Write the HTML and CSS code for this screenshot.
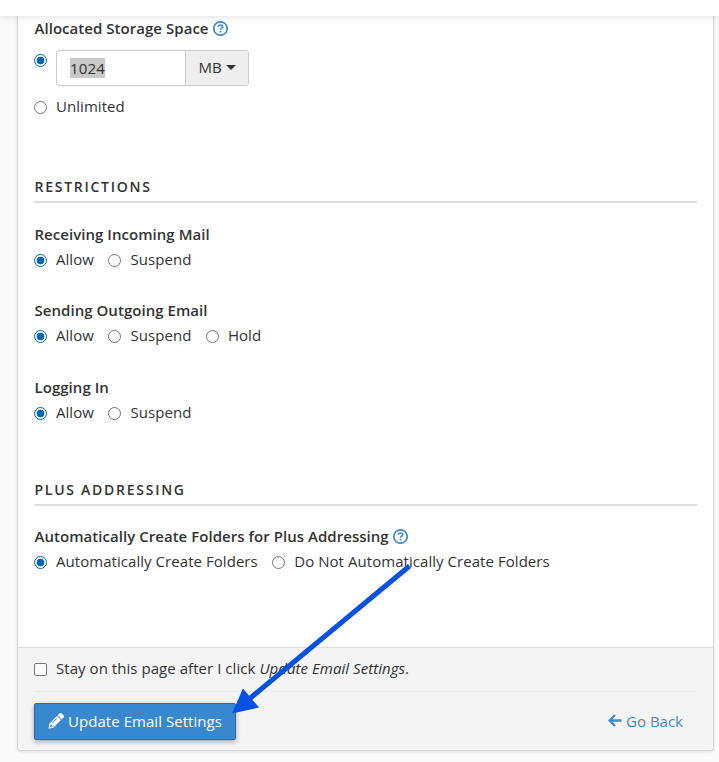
FILE: index.html
```html
<!DOCTYPE html>
<html lang="en">
<head>
<meta charset="utf-8">
<title>Email Settings</title>
<link rel="stylesheet" href="styles.css">
</head>
<body>
<header class="topbar"></header>
<main class="card">
  <form class="card-body">
    <section class="field storage">
      <div class="label">Allocated Storage Space
        <svg class="help" viewBox="0 0 15 15"><circle cx="7.5" cy="7.5" r="6.700"/><path d="M5.300 5.900C5.400 4.600 6.300 4 7.500 4c1.300 0 2.200.7 2.200 1.700C9.700 7.100 7.600 7.100 7.600 8.700M7.600 10v1.500"/></svg>
      </div>
      <div class="quota">
        <input type="radio" name="quota" checked>
        <div class="group"><span class="value"><span class="selected">1024</span></span><button type="button" class="unit">MB<span class="caret"></span></button></div>
      </div>
      <div class="options unlimited"><label><input type="radio" name="quota">Unlimited</label></div>
    </section>

    <h2 class="restrictions">Restrictions</h2>
    <section class="field">
      <div class="label">Receiving Incoming Mail</div>
      <div class="options">
        <label><input type="radio" name="receive" checked>Allow</label>
        <label><input type="radio" name="receive">Suspend</label>
      </div>
    </section>
    <section class="field sending">
      <div class="label">Sending Outgoing Email</div>
      <div class="options">
        <label><input type="radio" name="send" checked>Allow</label>
        <label><input type="radio" name="send">Suspend</label>
        <label><input type="radio" name="send">Hold</label>
      </div>
    </section>
    <section class="field login">
      <div class="label">Logging In</div>
      <div class="options">
        <label><input type="radio" name="login" checked>Allow</label>
        <label><input type="radio" name="login">Suspend</label>
      </div>
    </section>

    <h2 class="plus">Plus Addressing</h2>
    <section class="field">
      <div class="label">Automatically Create Folders for Plus Addressing
        <svg class="help" viewBox="0 0 15 15"><circle cx="7.5" cy="7.5" r="6.700"/><path d="M5.300 5.900C5.400 4.600 6.300 4 7.500 4c1.300 0 2.200.7 2.200 1.700C9.700 7.100 7.600 7.100 7.600 8.700M7.600 10v1.500"/></svg>
      </div>
      <div class="options">
        <label><input type="radio" name="plus" checked>Automatically Create Folders</label>
        <label><input type="radio" name="plus">Do Not Automatically Create Folders</label>
      </div>
    </section>
  </form>
  <footer class="card-footer">
    <div class="options stay"><label><input type="checkbox"><span>Stay on this page after I click <em>Update Email Settings</em>.</span></label></div>
    <div class="actions">
      <button type="button" class="primary">
        <svg class="pencil" viewBox="0 0 16 16"><path fill-rule="evenodd" d="M11.300.7a1.800 1.800 0 0 1 2.600 0l1.400 1.400a1.800 1.800 0 0 1 0 2.600L13.600 6.400 9.600 2.400zM8.900 3.100l4 4-7.600 7.600L.5 15.700l.8-5zM2.500 11.400l-.4 2.700 2.600-.5v-1.200H3.500v-1zM8.600 5.200L4.200 9.600l.5.5 4.400-4.400z"/></svg>Update Email Settings
      </button>
      <a class="back"><svg viewBox="0 0 14 13"><path d="M7 1L1.600 6.500 7 12M2 6.500h11.500"/></svg>Go Back</a>
    </div>
  </footer>
</main>
<svg class="pointer" viewBox="0 0 719 762"><path class="shaft" d="M409.500 566L248 700"/><path d="M232 713.500L243 688.500L259 707.500z"/></svg>
</body>
</html>
```

FILE: styles.css
```css
* { box-sizing: border-box; }

body {
  margin: 0;
  height: 762px;
  overflow: hidden;
  background: #fafafa;
  color: #333;
  font: 15px/22px "Open Sans", sans-serif;
}

.topbar {
  position: relative;
  height: 16px;
  background: #fff;
  box-shadow: 0 1px 7px rgba(0, 0, 0, .13);
  z-index: 1;
}

.card {
  width: 697px;
  height: 735px;
  margin-left: 17px;
  display: flex;
  flex-direction: column;
  background: #fff;
  border: 1px solid #d6d6d6;
  border-top: 0;
  border-radius: 0 0 4px 4px;
  box-shadow: 0 1px 3px rgba(0, 0, 0, .1);
}

.card-body { flex: 1; padding: 2px 16px 0; }

.label {
  height: 22px;
  display: flex;
  align-items: center;
  gap: 4px;
  margin-bottom: 2px;
  font-weight: 600;
  letter-spacing: .04px;
  padding: 0 0 2px 0.500px;
}

.help {
  width: 15px;
  height: 15px;
  fill: none;
  stroke: #428bca;
  stroke-width: 1.700;
}

.field { height: 47px; margin-bottom: 29px; }
.sending { margin-bottom: 30px; }
.storage { height: 98px; margin-bottom: 0; }

.quota { display: flex; height: 36px; margin: 10px 0 9px; }
.storage .label { margin-bottom: 0; }
.quota input { margin: 4px 9px 0 0; }

.group {
  display: flex;
  width: 193px;
  border: 1px solid #ccc;
  border-radius: 3px;
  overflow: hidden;
}

.value { width: 128px; padding: 7px 13px; line-height: 20px; letter-spacing: .15px; }
.selected { display: inline-block; background: #c8c8c8; }

.unit {
  flex: 1;
  display: flex;
  align-items: center;
  justify-content: center;
  gap: 4px;
  border: 0;
  border-left: 1px solid #ccc;
  padding: 0 0 2px;
  background: #eee;
  color: #333;
  font: inherit;
}

.caret {
  border: 5px solid transparent;
  border-top-color: #333;
  border-bottom: 0;
}

.options { display: flex; gap: 14.500px; height: 22px; letter-spacing: .05px; }
.options label { display: flex; align-items: center; gap: 9px; white-space: nowrap; }

input {
  flex: none;
  appearance: none;
  width: 13px;
  height: 13px;
  margin: 2px 0 0;
  border: 1px solid #767676;
  border-radius: 50%;
  background: #fff;
}

input:checked {
  border-color: #0067b8;
  background: radial-gradient(circle, #0067b8 3.500px, #fff 4.200px);
}

input[type="checkbox"] { border-radius: 2px; }
.unlimited input { margin-top: 3px; }

h2 {
  height: 27px;
  margin: 0 0 21px;
  border-bottom: 2px solid #ddd;
  padding-left: 0.500px;
  font-size: 14px;
  font-weight: 600;
  line-height: 22px;
  letter-spacing: 1.730px;
  text-transform: uppercase;
}

.restrictions { margin-top: 60px; }
.login { margin-bottom: 0; }
.plus { margin: 55px 0 20px; }

.card-footer {
  height: 103px;
  padding: 9px 16px 0;
  border-top: 1px solid #ddd;
  border-radius: 0 0 4px 4px;
  background: #f4f4f4;
}

.stay { height: 34px; }
.stay label { height: 22px; }

.actions {
  display: flex;
  justify-content: space-between;
  padding: 11px 14px 0 0;
  border-top: 1px solid #eaeaea;
}

.primary {
  display: flex;
  align-items: center;
  justify-content: center;
  gap: 4px;
  width: 202px;
  height: 37px;
  padding: 0 0 2px;
  border: 1px solid #2a6ca8;
  border-radius: 2px;
  background: #3888cf;
  color: #fff;
  font: inherit;
  letter-spacing: .05px;
  white-space: nowrap;
  box-shadow: 0 2px 5px rgba(0, 0, 0, .3);
}

.pencil { width: 16px; height: 16px; fill: #fff; }

.back { display: flex; align-items: center; gap: 4px; height: 37px; padding-bottom: 2px; color: #428bca; }
.back svg { width: 14px; height: 13px; fill: none; stroke: #428bca; stroke-width: 2.300; }

.pointer { position: absolute; z-index: 2; top: 0; left: 0; width: 719px; height: 762px; fill: #0550e6; pointer-events: none; }
.shaft { stroke: #0550e6; stroke-width: 5; }
```
